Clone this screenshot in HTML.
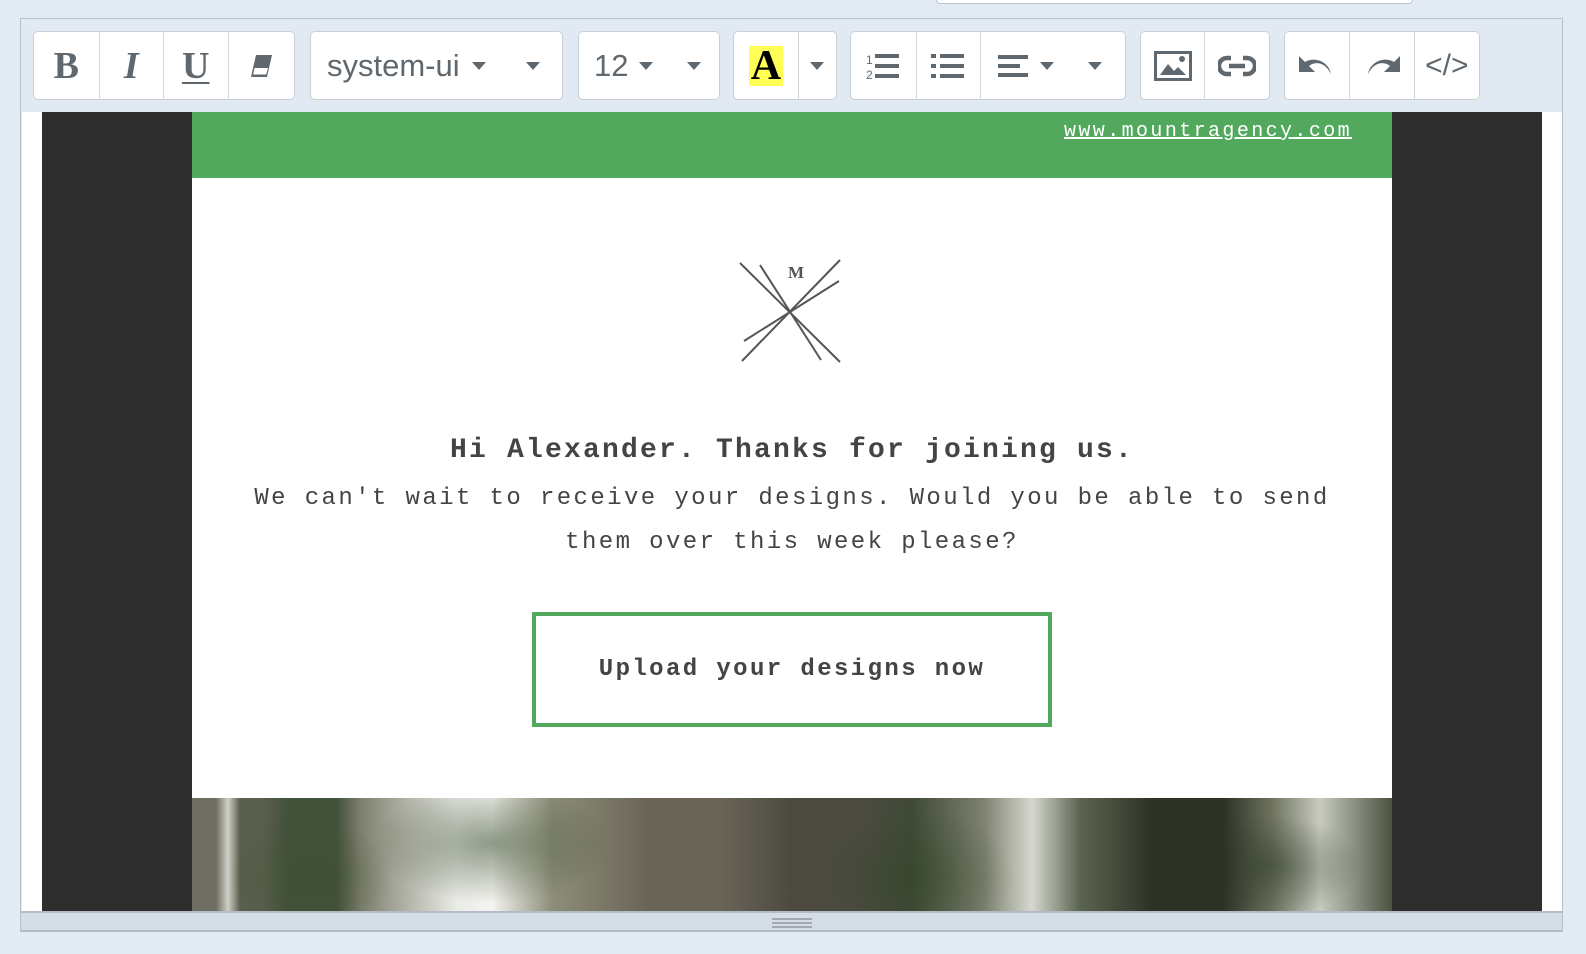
<!DOCTYPE html>
<html><head><meta charset="utf-8"><style>
*{box-sizing:border-box;margin:0;padding:0}
body{width:1586px;height:954px;background:#e2ebf4;position:relative;overflow:hidden;font-family:"Liberation Sans",sans-serif}
.abs{position:absolute}
.topbox{left:936px;top:-6px;width:477px;height:10px;background:#fff;border:1px solid #bcc5ce;border-radius:4px}
.panel{left:20px;top:18px;width:1543px;height:914px;border:1px solid #b8c1ca;background:#e1eaf3}
.grp{position:absolute;top:31px;height:69px;background:#fff;border:1px solid #c9cfd5;border-radius:5px;display:flex;overflow:hidden}
.btn{height:100%;display:flex;align-items:center;justify-content:center;border-right:1px solid #d3d8dd;color:#5f686f}
.btn:last-child{border-right:none}
.tri{display:inline-block;width:0;height:0;border-left:7px solid transparent;border-right:7px solid transparent;border-top:8px solid #5f686f}
.mono{font-family:"Liberation Mono",monospace}
</style></head><body>
<div class="abs topbox"></div>
<div class="abs panel"></div>

<div class="grp" style="left:33px;width:262px">
 <div class="btn" style="width:66px;font:bold 38px 'Liberation Serif',serif">B</div>
 <div class="btn" style="width:65px;font:italic bold 38px 'Liberation Serif',serif">I</div>
 <div class="btn" style="width:65px;font:bold 38px 'Liberation Serif',serif;text-decoration:underline;text-decoration-thickness:2px;text-underline-offset:4px">U</div>
 <div class="btn" style="width:66px"><svg width="28" height="28" viewBox="0 0 28 28"><path d="M9 3h16l-5 22H4z" fill="#5f686f"/><path d="M7.5 16h13.5l-1.8 6.5H6.2z" fill="#fff"/></svg></div>
</div>
<div class="grp" style="left:310px;width:253px">
 <div class="btn" style="width:253px;justify-content:flex-start;padding-left:16px;font-size:31px;color:#5f686f">system-ui&nbsp;<span class="tri" style="margin-left:4px"></span><span class="tri" style="margin-left:40px"></span></div>
</div>
<div class="grp" style="left:578px;width:142px">
 <div class="btn" style="width:142px;justify-content:flex-start;padding-left:15px;font-size:31px">12&nbsp;<span class="tri" style="margin-left:2px"></span><span class="tri" style="margin-left:34px"></span></div>
</div>
<div class="grp" style="left:733px;width:104px">
 <div class="btn" style="width:66px"><span style="background:#ffff55;font:bold 42px 'Liberation Serif',serif;color:#000;line-height:40px;padding:0 2px">A</span></div>
 <div class="btn" style="width:38px"><span class="tri"></span></div>
</div>
<div class="grp" style="left:850px;width:276px">
 <div class="btn" style="width:66px"><svg width="36" height="30" viewBox="0 0 36 30"><text x="1" y="13" font-size="12" font-family="Liberation Sans" fill="#5f686f">1</text><text x="1" y="28" font-size="12" font-family="Liberation Sans" fill="#5f686f">2</text><rect x="10" y="3" width="24" height="4" fill="#5f686f"/><rect x="10" y="13" width="24" height="4" fill="#5f686f"/><rect x="10" y="23" width="24" height="4" fill="#5f686f"/></svg></div>
 <div class="btn" style="width:65px"><svg width="34" height="28" viewBox="0 0 34 28"><g fill="#5f686f"><rect x="0" y="2" width="5" height="4"/><rect x="9" y="2" width="24" height="4"/><rect x="0" y="12" width="5" height="4"/><rect x="9" y="12" width="24" height="4"/><rect x="0" y="22" width="5" height="4"/><rect x="9" y="22" width="24" height="4"/></g></svg></div>
 <div class="btn" style="width:145px;justify-content:flex-start;padding-left:17px"><svg width="32" height="28" viewBox="0 0 32 28"><g fill="#5f686f"><rect x="0" y="3" width="30" height="4"/><rect x="0" y="12" width="22" height="4"/><rect x="0" y="21" width="30" height="4"/></g></svg><span class="tri" style="margin-left:10px"></span><span class="tri" style="margin-left:34px"></span></div>
</div>
<div class="grp" style="left:1140px;width:130px">
 <div class="btn" style="width:65px"><svg width="38" height="30" viewBox="0 0 38 30"><rect x="1.5" y="1.5" width="35" height="27" fill="none" stroke="#5f686f" stroke-width="3"/><path d="M6 24l8-11 6 7 4-4 8 8z" fill="#5f686f"/><circle cx="28" cy="8" r="3" fill="#5f686f"/></svg></div>
 <div class="btn" style="width:65px"><svg width="38" height="24" viewBox="0 0 38 24"><path d="M13 4H9a8 8 0 0 0 0 16h4M25 4h4a8 8 0 0 1 0 16h-4M11 12h16" fill="none" stroke="#5f686f" stroke-width="4.5"/></svg></div>
</div>
<div class="grp" style="left:1284px;width:196px">
 <div class="btn" style="width:66px"><svg width="40" height="28" viewBox="0 0 40 28"><path d="M2 4v16h16l-6-6c6-5 16-4 22 8 -2-12-16-18-26-12z" fill="#5f686f"/></svg></div>
 <div class="btn" style="width:65px"><svg width="40" height="28" viewBox="0 0 40 28"><path d="M38 4v16H22l6-6c-6-5-16-4-22 8 2-12 16-18 26-12z" fill="#5f686f"/></svg></div>
 <div class="btn" style="width:65px;font-size:30px">&lt;/&gt;</div>
</div>

<!-- editor -->
<div class="abs" style="left:22px;top:112px;width:1540px;height:799px;background:#fff"></div>
<div class="abs" style="left:42px;top:112px;width:1500px;height:799px;background:#2d2d2d"></div>
<div class="abs" style="left:192px;top:112px;width:1200px;height:66px;background:#52a95e"></div>
<div class="abs mono" style="left:1064px;top:120px;font-size:20px;letter-spacing:2.4px;color:#fff;text-decoration:underline">www.mountragency.com</div>
<div class="abs" style="left:192px;top:178px;width:1200px;height:620px;background:#fff"></div>
<svg class="abs" style="left:730px;top:255px" width="120" height="115" viewBox="730 255 120 115"><g stroke="#555" stroke-width="2"><line x1="740" y1="263" x2="840" y2="362"/><line x1="760" y1="265" x2="821" y2="360"/><line x1="840" y1="260" x2="742" y2="361"/><line x1="839" y1="281" x2="744" y2="341"/></g><text x="796" y="278" text-anchor="middle" font-family="Liberation Serif" font-weight="bold" font-size="17" fill="#555">M</text></svg>
<div class="abs mono" style="left:192px;top:435px;width:1200px;text-align:center;font-size:28px;font-weight:bold;letter-spacing:2.2px;color:#444">Hi Alexander. Thanks for joining us.</div>
<div class="abs mono" style="left:192px;top:477px;width:1200px;text-align:center;font-size:24px;letter-spacing:2.4px;line-height:44px;color:#444">We can't wait to receive your designs. Would you be able to send<br>them over this week please?</div>
<div class="abs mono" style="left:532px;top:612px;width:520px;height:115px;border:4px solid #52a95e;display:flex;align-items:center;justify-content:center;font-size:24px;font-weight:bold;letter-spacing:2.4px;color:#444">Upload your designs now</div>
<div class="abs" style="left:192px;top:798px;width:1200px;height:113px;background:
linear-gradient(90deg,#6f6e62 0 2%,#cfd0c8 3%,#5a5e4c 4% 6%,#41513a 8% 12%,#7d7e6c 14%,#e9ebe6 22%,#f4f4f0 25%,#8d8e78 30%,#6a6458 38% 44%,#4c4a40 50% 56%,#3f4a36 60%,#7e8270 66%,#d6d8d0 70%,#5b6450 74%,#2e3226 80% 86%,#6e735f 90%,#c8cbc0 94%,#4a5240 100%)"></div>
<div class="abs" style="left:192px;top:798px;width:1200px;height:113px;background:radial-gradient(ellipse 120px 60px at 25% 40%,rgba(60,80,50,.55),transparent),radial-gradient(ellipse 100px 70px at 60% 70%,rgba(50,70,40,.5),transparent),radial-gradient(ellipse 90px 50px at 90% 60%,rgba(40,55,35,.5),transparent),radial-gradient(ellipse 80px 60px at 10% 70%,rgba(60,80,50,.5),transparent)"></div>
<!-- status bar -->
<div class="abs" style="left:21px;top:911px;width:1541px;height:21px;background:#d5dee7;border-top:2px solid #b2bcc7;border-bottom:2px solid #b2bcc7"></div>
<div class="abs" style="left:772px;top:918px;width:40px;height:2px;background:#a3a9ae;box-shadow:0 4px 0 #a3a9ae,0 8px 0 #a3a9ae"></div>
</body></html>
